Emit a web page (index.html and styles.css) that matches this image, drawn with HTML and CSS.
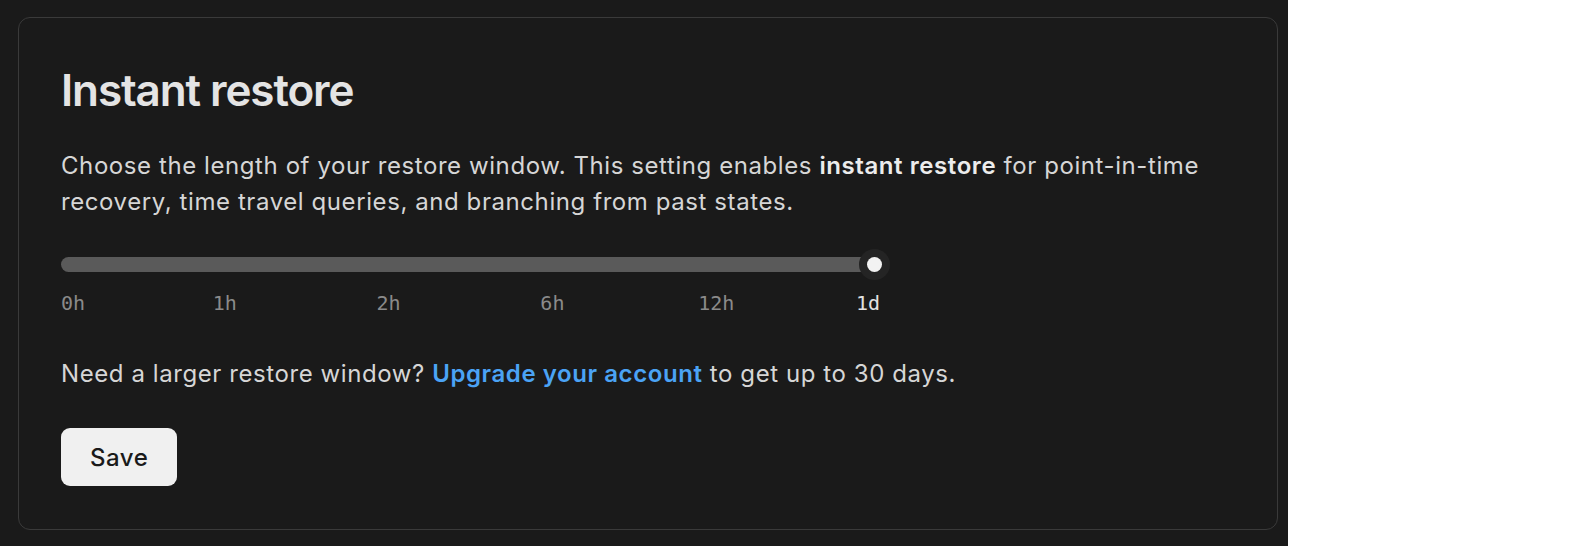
FILE: index.html
```html
<!DOCTYPE html>
<html lang="en">
<head>
<meta charset="utf-8">
<title>Instant restore</title>
<link rel="stylesheet" href="styles.css">
</head>
<body>
<div class="panel">
  <section class="card">
    <h1 class="title">Instant restore</h1>
    <p class="desc">Choose the length of your restore window. This setting enables <strong>instant restore</strong> for point-in-time recovery, time travel queries, and branching from past states.</p>
    <div class="slider">
      <div class="track">
        <div class="thumb"></div>
      </div>
      <div class="ticks">
        <span class="tick">0h</span>
        <span class="tick">1h</span>
        <span class="tick">2h</span>
        <span class="tick">6h</span>
        <span class="tick">12h</span>
        <span class="tick tick-active">1d</span>
      </div>
    </div>
    <p class="note">Need a larger restore window? <a class="link" href="#">Upgrade your account</a> to get up to 30 days.</p>
    <button class="save" type="button">Save</button>
  </section>
</div>
</body>
</html>
```
FILE: styles.css
```css
* { box-sizing: border-box; }
html, body { margin: 0; padding: 0; background: #ffffff; }
body {
  font-family: Inter, "Noto Sans", sans-serif;
}

.panel {
  width: 1288px;
  min-height: 100vh;
  background: #1a1a1a;
  padding: 17px 0 16px 18px;
}

.card {
  width: 1260px;
  border: 1px solid #3a3a3a;
  border-radius: 12px;
  background: #1a1a1a;
  padding: 42px 42px 43px;
}

.title {
  margin: 0 0 28px;
  font-size: 44px;
  line-height: 60px;
  font-weight: 600;
  color: #e4e4e4;
  letter-spacing: -1.1px;
}

.desc {
  margin: 0;
  font-size: 24px;
  line-height: 36px;
  letter-spacing: 0.58px;
  color: #d6d6d6;
}
.desc strong { font-weight: 600; color: #ececec; }

.slider {
  width: 819px;
  padding-top: 37px;
}

.track {
  position: relative;
  height: 15px;
  border-radius: 8px;
  background: #5a5a5a;
}
.thumb {
  position: absolute;
  top: 0;
  right: -2px;
  width: 15px;
  height: 15px;
  border-radius: 50%;
  background: #f2f2f2;
  box-shadow: 0 0 0 8px #242424;
}

.ticks {
  display: flex;
  justify-content: space-between;
  margin-top: 16px;
  font-family: "DejaVu Sans Mono", "Liberation Mono", monospace;
  font-size: 20px;
  line-height: 30px;
  color: #8a8a8a;
}
.tick {
  width: 0;
  display: flex;
  justify-content: center;
  white-space: nowrap;
}
.tick:first-child { justify-content: flex-start; }
.tick:last-child { justify-content: flex-end; }
.tick-active { color: #e2e2e2; }

.note {
  margin: 38px 0 36px;
  font-size: 24px;
  line-height: 36px;
  letter-spacing: 0.58px;
  color: #d6d6d6;
}
.link {
  color: #4ba3f5;
  font-weight: 600;
  text-decoration: none;
}

.save {
  display: block;
  height: 58px;
  padding: 0 29px;
  border: 0;
  border-radius: 9px;
  background: #f0f0f0;
  color: #1a1a1a;
  font-family: inherit;
  font-size: 24px;
  font-weight: 500;
  letter-spacing: 0.55px;
  cursor: pointer;
}
```
